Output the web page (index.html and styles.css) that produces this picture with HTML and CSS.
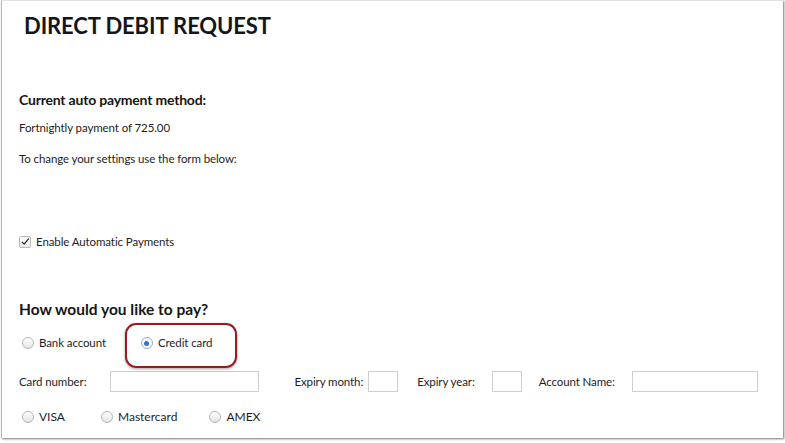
FILE: index.html
```html
<!DOCTYPE html>
<html>
<head>
<meta charset="utf-8">
<link rel="stylesheet" href="styles.css">
</head>
<body>
<div class="frame">
  <h1 class="title">DIRECT DEBIT REQUEST</h1>
  <h2 class="heading current">Current auto payment method:</h2>
  <p class="text first">Fortnightly payment of 725.00</p>
  <p class="text second">To change your settings use the form below:</p>

  <label class="check-row">
    <span class="checkbox"><svg width="12" height="12" viewBox="0 0 12 12"><path d="M2.6 6.2 L5 8.6 L10.2 2.2" fill="none" stroke="#2b2b2b" stroke-width="1.5" stroke-linecap="round" stroke-linejoin="round"/></svg></span>
    <span>Enable Automatic Payments</span>
  </label>

  <h2 class="heading pay">How would you like to pay?</h2>

  <div class="radio-row method">
    <label class="opt bank"><span class="radio"></span><span>Bank account</span></label>
    <label class="opt credit highlighted"><span class="radio on"></span><span>Credit card</span></label>
  </div>

  <div class="card-row">
    <span class="lbl">Card number:</span>
    <span class="inp w-card"></span>
    <span class="lbl l-month">Expiry month:</span>
    <span class="inp w-small i-month"></span>
    <span class="lbl l-year">Expiry year:</span>
    <span class="inp w-small i-year"></span>
    <span class="lbl l-name">Account Name:</span>
    <span class="inp w-name"></span>
  </div>

  <div class="radio-row brands">
    <label class="opt visa"><span class="radio"></span><span>VISA</span></label>
    <label class="opt master"><span class="radio"></span><span>Mastercard</span></label>
    <label class="opt amex"><span class="radio"></span><span>AMEX</span></label>
  </div>
</div>
</body>
</html>
```

FILE: styles.css
```css
* { box-sizing: border-box; }
html, body { margin: 0; padding: 0; background: #ffffff; }
body {
  font-family: Lato, "Open Sans", "Liberation Sans", sans-serif;
  color: #1d1d1f;
  width: 785px;
  height: 443px;
  overflow: hidden;
}
.frame {
  width: 782px;
  height: 438px;
  margin-left: 1px;
  border-left: 1px solid #b8b8b8;
  border-top: 1px solid #e2e2e2;
  box-shadow: 1px 1px 2px rgba(0,0,0,0.55);
  background: #fff;
  padding: 0 0 0 17px;
  display: flex;
  flex-direction: column;
  align-items: flex-start;
}
.title {
  margin: 12px 0 0 5px;
  font-size: 22px;
  line-height: 26px;
  font-weight: 700;
  color: #14161c;
  letter-spacing: -0.1px;
}
.heading {
  margin: 0;
  font-weight: 700;
  color: #151515;
}
.current {
  margin-top: 52px;
  font-size: 14px;
  line-height: 18px;
  letter-spacing: -0.2px;
}
.text {
  margin: 0;
  font-size: 11.5px;
  line-height: 16px;
  letter-spacing: -0.1px;
  color: #1d1d1d;
}
.first { margin-top: 11px; }
.second { margin-top: 15px; }

.check-row {
  margin-top: 67px;
  display: flex;
  align-items: center;
  gap: 5px;
  font-size: 11.5px;
  line-height: 16px;
  letter-spacing: -0.1px;
}
.checkbox {
  width: 12px;
  height: 12px;
  border: 1px solid #b9b9b9;
  border-radius: 2px;
  background: linear-gradient(#ffffff, #ececec);
  display: flex;
  align-items: center;
  justify-content: center;
}
.checkbox svg { display: block; margin-top: -1px; }

.pay {
  margin-top: 49px;
  font-size: 15.5px;
  line-height: 20px;
}

.radio-row {
  display: flex;
  align-items: center;
  font-size: 11.5px;
  line-height: 16px;
  letter-spacing: -0.1px;
}
.opt {
  display: flex;
  align-items: center;
  gap: 5px;
}
.radio {
  width: 12px;
  height: 12px;
  border-radius: 50%;
  border: 1px solid #b5b5b5;
  background: linear-gradient(#ffffff, #e4e4e4);
  box-shadow: inset 0 1px 1px rgba(255,255,255,0.8);
  display: flex;
  align-items: center;
  justify-content: center;
}
.radio.on {
  border-color: #8fa9d6;
  background: #fff;
}
.radio.on::after {
  content: "";
  width: 5px;
  height: 5px;
  border-radius: 50%;
  background: #3a6fd0;
}
.method { margin-top: 16px; padding-left: 3px; }
.credit { margin-left: 35px; position: relative; }
.highlighted::before {
  content: "";
  position: absolute;
  left: -16px;
  top: -12px;
  width: 108px;
  height: 41px;
  border: 2px solid #981b1e;
  border-radius: 11px;
  box-shadow: 0 1px 3px rgba(0,0,0,0.35);
}

.card-row {
  margin-top: 20px;
  display: flex;
  align-items: center;
  font-size: 11.5px;
  line-height: 16px;
  letter-spacing: -0.1px;
}
.inp {
  display: block;
  height: 21px;
  border: 1px solid #cfcfcf;
  background: #fff;
}
.w-card { width: 149px; margin-left: 24px; }
.l-month { margin-left: 35px; }
.w-small { width: 30px; }
.i-month { margin-left: 5px; }
.l-year { margin-left: 19px; }
.i-year { margin-left: 17px; }
.l-name { margin-left: 17px; }
.w-name { width: 126px; margin-left: 17px; }

.brands {
  margin-top: 17px;
  padding-left: 3px;
  font-size: 12px;
  letter-spacing: 0;
}
.master { margin-left: 36px; }
.amex { margin-left: 32px; }
```
